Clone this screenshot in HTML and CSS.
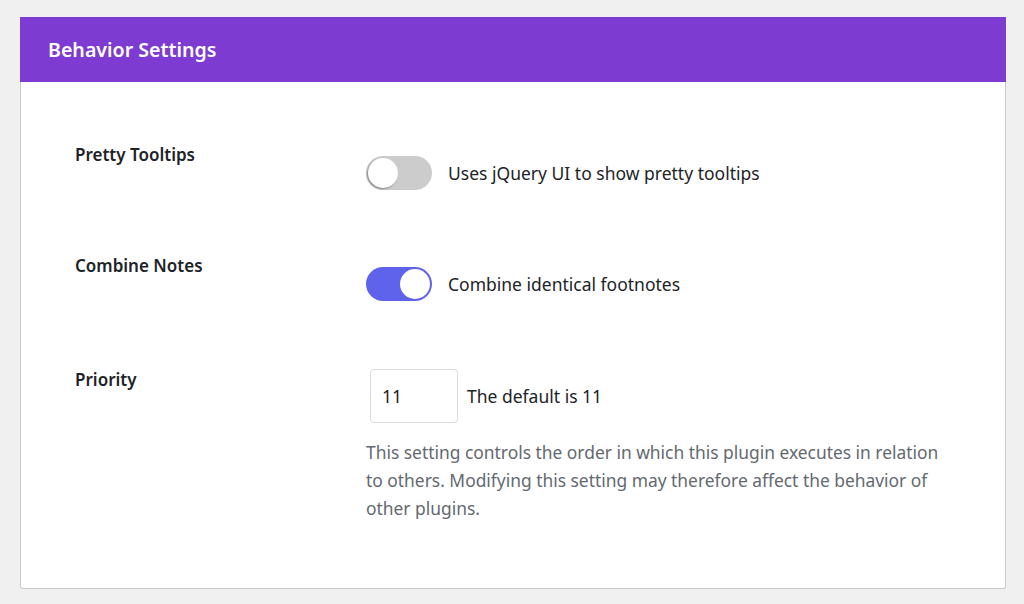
FILE: index.html
```html
<!DOCTYPE html>
<html lang="en">
<head>
<meta charset="utf-8">
<title>Behavior Settings</title>
<link rel="stylesheet" href="styles.css">
</head>
<body>
<section class="card">
  <header class="card-head">
    <h2 class="card-title">Behavior Settings</h2>
  </header>
  <div class="card-body">
    <div class="row row-1">
      <div class="label">Pretty Tooltips</div>
      <div class="control">
        <label class="toggle-line">
          <span class="toggle"><span class="knob"></span></span>
          <span class="toggle-text">Uses jQuery UI to show pretty tooltips</span>
        </label>
      </div>
    </div>
    <div class="row row-2">
      <div class="label">Combine Notes</div>
      <div class="control">
        <label class="toggle-line">
          <span class="toggle on"><span class="knob"></span></span>
          <span class="toggle-text">Combine identical footnotes</span>
        </label>
      </div>
    </div>
    <div class="row row-3">
      <div class="label">Priority</div>
      <div class="control control-input">
        <div class="input-line">
          <input class="num" type="text" value="11">
          <span class="toggle-text">The default is 11</span>
        </div>
        <p class="help">This setting controls the order in which this plugin executes in relation to others. Modifying this setting may therefore affect the behavior of other plugins.</p>
      </div>
    </div>
  </div>
</section>
</body>
</html>
```
FILE: styles.css
```css
html, body {
  margin: 0;
  padding: 0;
  background: #f0f0f1;
}
body {
  font-family: "Noto Sans", "Open Sans", sans-serif;
  color: #1d2327;
  padding-top: 17px;
  padding-left: 20px;
}
.card {
  width: 984px;
  background: #fff;
  border: 1px solid #c9cacc;
  border-top: none;
  border-radius: 0 0 3px 3px;
  box-sizing: content-box;
}
.card-head {
  background: #7d3bd1;
  height: 65px;
  display: flex;
  align-items: center;
  padding-left: 28px;
  margin: 0 -1px;
}
.card-title {
  margin: 0;
  color: #fff;
  font-size: 19.6px;
  font-weight: 600;
}
.card-body {
  padding: 61px 0 66px 54px;
}
.row {
  display: flex;
}
.row-1 { padding-bottom: 64px; }
.row-2 { padding-bottom: 67px; }
.label {
  width: 291px;
  flex: none;
  font-size: 17px;
  font-weight: 600;
  line-height: 24px;
}
.control {
  padding-top: 13px;
}
.control-input {
  padding-top: 1px;
}
.toggle-line {
  display: flex;
  align-items: center;
  gap: 16px;
}
.toggle-text {
  font-size: 17.5px;
  line-height: 24px;
  color: #1d2327;
}
.toggle {
  width: 66px;
  height: 34px;
  border-radius: 17px;
  background: #cccccc;
  display: flex;
  align-items: center;
  padding: 2px;
  box-sizing: border-box;
}
.knob {
  width: 30px;
  height: 30px;
  border-radius: 50%;
  background: #fff;
  box-shadow: -1px 1px 2px rgba(0,0,0,0.35);
}
.toggle.on {
  background: #5f63ec;
  justify-content: flex-end;
}
.toggle.on .knob {
  box-shadow: none;
}
.input-line {
  display: flex;
  align-items: center;
  gap: 9px;
  padding-left: 4px;
}
.num {
  width: 88px;
  height: 54px;
  box-sizing: border-box;
  border: 1px solid #dcdcde;
  border-radius: 4px;
  padding: 0 0 0 11px;
  font-family: inherit;
  font-size: 17.5px;
  color: #1d2327;
  background: #fff;
  outline: none;
}
.help {
  margin: 15px 0 0;
  width: 590px;
  font-size: 17.4px;
  line-height: 28px;
  color: #646970;
}
```
